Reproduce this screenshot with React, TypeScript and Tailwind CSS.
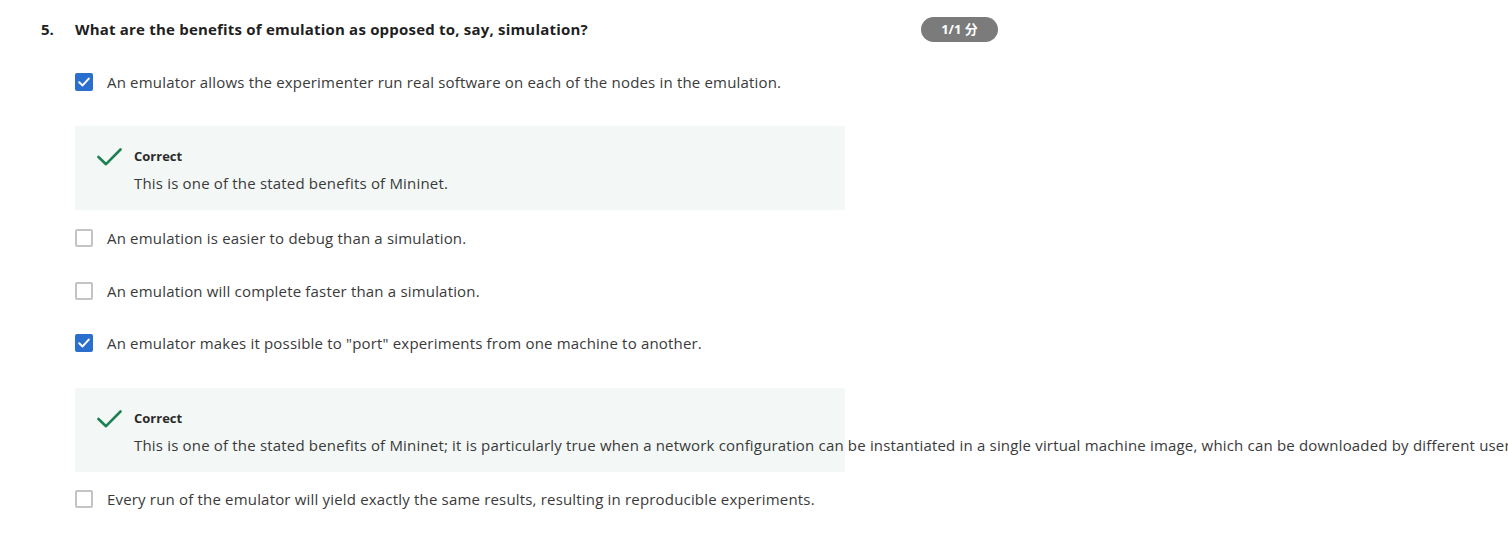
import React from "react";

const font = { fontFamily: '"Open Sans", "Noto Sans CJK SC", sans-serif' };

function CheckBox({ checked }: { checked: boolean }) {
  if (checked) {
    return (
      <div className="w-[18px] h-[18px] rounded-[2px] bg-[#2a6fcd] flex items-center justify-center shrink-0">
        <svg width="14" height="14" viewBox="0 0 14 14" fill="none">
          <path d="M2.2 7.2 L5.6 10.4 L11.8 3.6" stroke="white" strokeWidth="2" strokeLinecap="round" strokeLinejoin="round" />
        </svg>
      </div>
    );
  }
  return <div className="w-[18px] h-[18px] rounded-[2px] border-2 border-[#c4c4c4] bg-white shrink-0" />;
}

function Option({ checked, text }: { checked: boolean; text: string }) {
  return (
    <div className="flex items-center h-[24px] gap-[14px]">
      <CheckBox checked={checked} />
      <span className="text-[15px] tracking-[0.18px] leading-[20px] -mt-[1px] text-[#3a3a3a] whitespace-nowrap">{text}</span>
    </div>
  );
}

function Feedback({ text }: { text: string }) {
  return (
    <div className="w-[770px] h-[84px] bg-[#f3f8f6] pl-[22px] pt-[20px] flex">
      <div className="w-[37px] shrink-0 pt-[2px]">
        <svg width="25" height="18" viewBox="0 0 25 18" fill="none">
          <path d="M1.5 9 L9 16.2 L23.5 1.5" stroke="#1d8052" strokeWidth="2.6" strokeLinecap="round" strokeLinejoin="round" />
        </svg>
      </div>
      <div className="flex flex-col">
        <div className="text-[13px] leading-[20px] font-bold text-[#2b2b2b]">Correct</div>
        <div className="mt-[7px] text-[15px] tracking-[0.18px] leading-[20px] text-[#3a3a3a] whitespace-nowrap">{text}</div>
      </div>
    </div>
  );
}

export default function App() {
  return (
    <div className="w-[1508px] h-[537px] bg-white overflow-hidden" style={font}>
      <div className="pl-[41px] pt-[17px]">
        <div className="flex items-center w-[957px] h-[25px]">
          <div className="w-[34px] text-[15px] font-bold text-[#1f1f1f]">5.</div>
          <div className="flex-1 text-[15px] tracking-[0.2px] font-bold text-[#1f1f1f]">
            What are the benefits of emulation as opposed to, say, simulation?
          </div>
          <div className="w-[77px] h-[25px] rounded-full bg-[#7b7b7b] text-white text-[13px] font-bold flex items-center justify-center">
            1/1 分
          </div>
        </div>
        <div className="pl-[34px] mt-[28px] flex flex-col">
          <Option checked={true} text="An emulator allows the experimenter run real software on each of the nodes in the emulation." />
          <div className="mt-[32px]">
            <Feedback text="This is one of the stated benefits of Mininet." />
          </div>
          <div className="mt-[16px]">
            <Option checked={false} text="An emulation is easier to debug than a simulation." />
          </div>
          <div className="mt-[29px]">
            <Option checked={false} text="An emulation will complete faster than a simulation." />
          </div>
          <div className="mt-[28px]">
            <Option checked={true} text={'An emulator makes it possible to "port" experiments from one machine to another.'} />
          </div>
          <div className="mt-[33px]">
            <Feedback text="This is one of the stated benefits of Mininet; it is particularly true when a network configuration can be instantiated in a single virtual machine image, which can be downloaded by different users." />
          </div>
          <div className="mt-[15px]">
            <Option checked={false} text="Every run of the emulator will yield exactly the same results, resulting in reproducible experiments." />
          </div>
        </div>
      </div>
    </div>
  );
}
